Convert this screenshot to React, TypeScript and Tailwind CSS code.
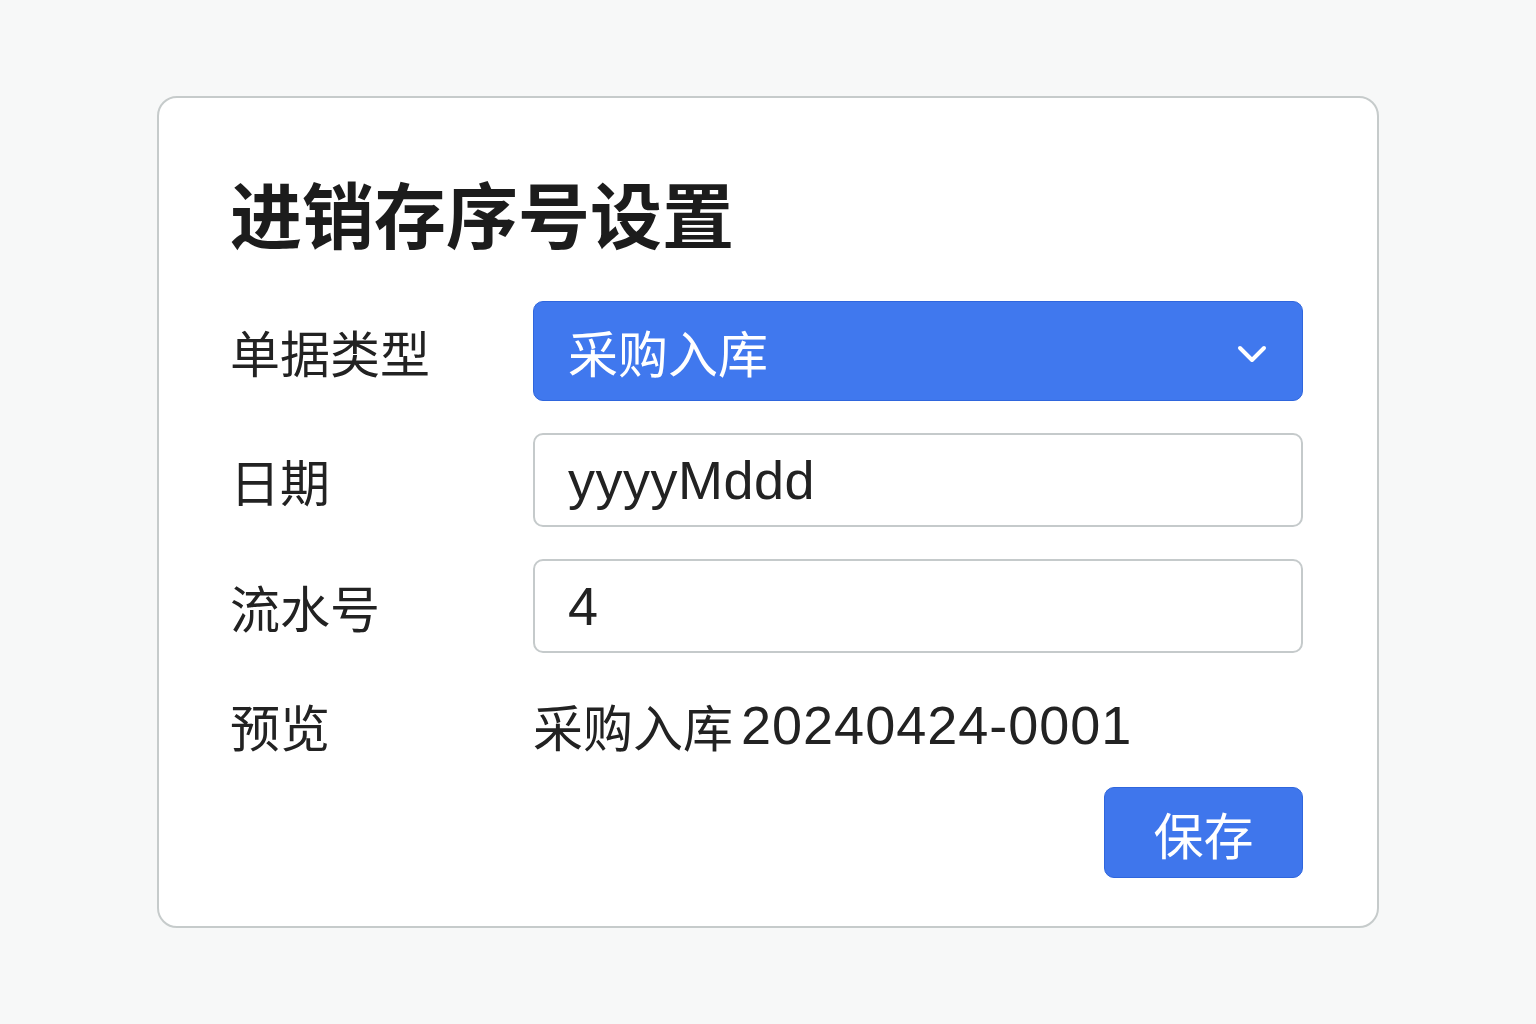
const font = { fontFamily: '"Noto Sans CJK SC", "Noto Sans", sans-serif' }
const latin = { fontFamily: '"Liberation Sans", Arial, sans-serif' }

function Row({ label, children }: { label: string; children: React.ReactNode }) {
    return (
        <div className="flex items-center">
            <div className="w-[303px] shrink-0 text-[50px] leading-none text-[#222]">{label}</div>
            <div className="flex-1">{children}</div>
        </div>
    )
}

export default function App() {
    return (
        <div className="min-h-screen bg-[#f7f8f8] pt-[96px] pl-[157px]" style={font}>
            <div className="w-[1222px] h-[832px] bg-white border-2 border-[#c6cbcb] rounded-[20px] pl-[71px] pr-[74px] pt-[78px]">
                <h1 className="text-[72px] leading-[72px] font-bold text-[#1c1c1c]">进销存序号设置</h1>

                <div className="mt-[53px] flex flex-col">
                    <Row label="单据类型">
                        <button className="w-full h-[100px] rounded-[10px] bg-[#4078ee] border border-[#2f66dd] flex items-center justify-between pl-[34px] pr-[34px] text-white text-[50px] leading-none">
                            <span>采购入库</span>
                            <svg className="mt-[6px]" width="32" height="20" viewBox="0 0 32 20" fill="none" stroke="white" strokeWidth="4" strokeLinecap="round" strokeLinejoin="round">
                                <polyline points="4,4 16,16 28,4" />
                            </svg>
                        </button>
                    </Row>

                    <div className="mt-[32px]">
                        <Row label="日期">
                            <div className="h-[94px] rounded-[10px] border-2 border-[#c5cacb] flex items-center pl-[33px] text-[54px] leading-none text-[#222] tracking-[0.5px]" style={latin}>
                                yyyyMddd
                            </div>
                        </Row>
                    </div>

                    <div className="mt-[32px]">
                        <Row label="流水号">
                            <div className="h-[94px] rounded-[10px] border-2 border-[#c5cacb] flex items-center pl-[33px] text-[54px] leading-none text-[#222]" style={latin}>
                                4
                            </div>
                        </Row>
                    </div>

                    <div className="mt-[42px]">
                        <Row label="预览">
                            <div className="h-[60px] flex items-center text-[50px] leading-none text-[#222]">
                                <span>采购入库</span>
                                <span className="ml-[8px] text-[54px] tracking-[1px]" style={latin}>20240424-0001</span>
                            </div>
                        </Row>
                    </div>

                    <div className="mt-[32px] flex justify-end">
                        <button className="w-[199px] h-[91px] rounded-[10px] bg-[#3f76ec] border border-[#2f66dd] text-white text-[50px] leading-none">
                            保存
                        </button>
                    </div>
                </div>
            </div>
        </div>
    )
}
